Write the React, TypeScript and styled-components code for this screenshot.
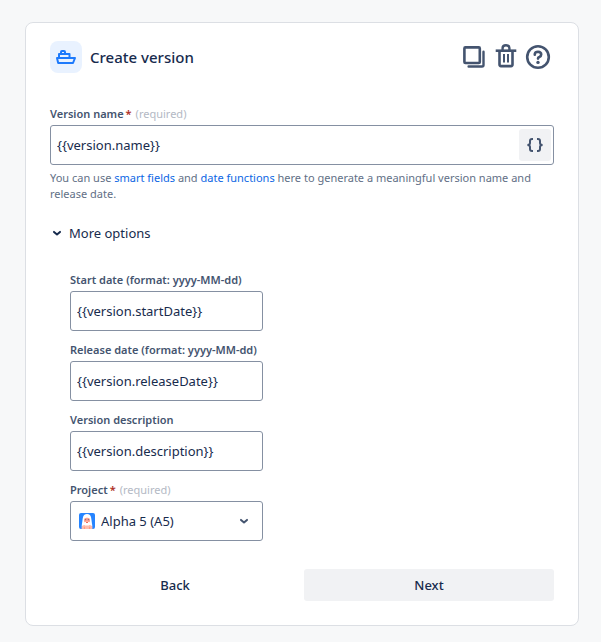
import React from "react";
import styled, { createGlobalStyle } from "styled-components";

const GlobalStyle = createGlobalStyle`
  *, *::before, *::after { box-sizing: border-box; }
  body {
    margin: 0;
    background: #f7f8f9;
    color: #172b4d;
    font-family: "Noto Sans", "Open Sans", sans-serif;
  }
  button, input, select { font: inherit; color: inherit; }
`;

const Page = styled.main`
  padding: 22px 22px 16px 25px;
`;

const Card = styled.form`
  padding: 18px 24px 24px;
  background: #fff;
  border: 1px solid #dcdfe4;
  border-radius: 8px;
`;

const Header = styled.header`
  display: flex;
  align-items: center;
  gap: 8px;
  margin-bottom: 33px;
`;

const IconTile = styled.span`
  display: flex;
  width: 32px;
  height: 32px;
  border-radius: 8px;
  background: #e9f2ff;
  color: #1d7afc;
`;

const Title = styled.h1`
  flex: 1;
  margin: 0;
  font-size: 15px;
  line-height: 20px;
  font-weight: 500;
`;

const Actions = styled.div`
  display: flex;
`;

const IconButton = styled.button<{ $filled?: boolean }>`
  display: flex;
  flex: none;
  align-items: center;
  justify-content: center;
  width: 32px;
  height: 32px;
  padding: 0;
  border: 0;
  border-radius: 3px;
  background: ${(p) => (p.$filled ? "#f1f2f4" : "transparent")};
  color: #44546f;
  cursor: pointer;
`;

const Field = styled.div`
  display: flex;
  flex-direction: column;
  gap: 3px;
`;

const Label = styled.label`
  color: #44546f;
  font-size: 11px;
  line-height: 16px;
  font-weight: 600;
  white-space: nowrap;
`;

const Asterisk = styled.span`
  padding: 0 4px 0 2px;
  color: #ae2e24;
`;

const Hint = styled.span`
  color: #b3b9c4;
  font-weight: 400;
`;

const Control = styled.div`
  position: relative;
  display: flex;
  align-items: center;
  height: 40px;
  padding-right: 2px;
  border: 1px solid #8590a2;
  border-radius: 3px;
`;

const Input = styled.input`
  flex: 1;
  min-width: 0;
  height: 100%;
  padding: 0 6px;
  border: 0;
  outline: 0;
  background: transparent;
  font-size: 13px;
`;

const Select = styled.select`
  flex: 1;
  height: 100%;
  padding: 0 28px 0 30px;
  border: 0;
  outline: 0;
  appearance: none;
  background: transparent;
  font-size: 13px;
`;

const Adornment = styled.span<{ $side: "left" | "right" }>`
  position: absolute;
  ${(p) => (p.$side === "left" ? "left: 8px" : "right: 11px")};
  display: flex;
  color: #44546f;
  pointer-events: none;
`;

const Help = styled.p`
  margin: 5px 0 21px;
  color: #626f86;
  font-size: 11px;
  line-height: 16px;
`;

const Link = styled.a`
  color: #0c66e4;
  text-decoration: none;
`;

const Disclosure = styled.button`
  display: flex;
  align-items: center;
  gap: 5px;
  padding: 0;
  border: 0;
  background: transparent;
  font-size: 13px;
  line-height: 20px;
  cursor: pointer;
`;

const Options = styled.div`
  display: grid;
  grid-template-columns: minmax(193px, max-content);
  gap: 11px;
  margin: 29px 20px 28px;
`;

const Footer = styled.footer`
  display: grid;
  grid-template-columns: 1fr 1fr;
  gap: 4px;
`;

const Button = styled.button<{ $filled?: boolean }>`
  height: 32px;
  border: 0;
  border-radius: 3px;
  background: ${(p) => (p.$filled ? "#f1f2f4" : "transparent")};
  font-size: 13px;
  font-weight: 500;
  cursor: pointer;
`;

const ShipIcon = () => (
  <svg width="32" height="32" viewBox="0 0 32 32" fill="none" stroke="currentColor" strokeWidth="2" strokeLinejoin="round" aria-hidden="true">
    <path d="M7 17H25L23 22H8.2Z" />
    <path d="M9 17V13H19.5V17" />
    <path d="M11 13V11Q11 10 12 10H14Q15 10 15 11V13" />
  </svg>
);

const CopyIcon = () => (
  <svg width="32" height="32" viewBox="0 0 32 32" fill="none" stroke="currentColor" strokeWidth="2.4" strokeLinejoin="round" strokeLinecap="round" aria-hidden="true">
    <rect x="6.4" y="6.4" width="15.4" height="15.6" rx="1" strokeWidth="2.6" />
    <path d="M25.5 10.8V24Q25.5 25.5 24 25.5H10.6" />
  </svg>
);

const TrashIcon = () => (
  <svg width="32" height="32" viewBox="0 0 32 32" fill="none" stroke="currentColor" strokeWidth="2.6" aria-hidden="true">
    <path d="M5.7 9.7H26.3" />
    <path d="M12.6 9V7Q12.6 4.3 16 4.3T19.4 7V9" strokeWidth="2.4" />
    <path d="M9.5 10V23.6Q9.5 25.1 11 25.1H21Q22.5 25.1 22.5 23.6V10" />
    <path d="M14 13V21.5M18 13V21.5" strokeWidth="2" />
  </svg>
);

const HelpIcon = () => (
  <svg width="32" height="32" viewBox="0 0 32 32" fill="none" stroke="currentColor" strokeWidth="2.6" aria-hidden="true">
    <circle cx="16" cy="16" r="10.8" />
    <path d="M12.8 13.8V13Q13.2 10.8 16 10.8Q19.2 11 19.2 13.5Q19.2 15.2 17.3 16Q16 16.5 16 17.6" strokeLinecap="round" />
    <circle cx="16" cy="21.4" r="1.7" fill="currentColor" stroke="none" />
  </svg>
);

const BracesIcon = () => (
  <svg width="32" height="32" viewBox="0 0 32 32" fill="none" stroke="currentColor" strokeWidth="2" aria-hidden="true">
    <path d="M14 10H13Q11 10 11 12V14Q11 16 8.4 16Q11 16 11 18V20Q11 22 13 22H14" />
    <path d="M18 10H19Q21 10 21 12V14Q21 16 23.6 16Q21 16 21 18V20Q21 22 19 22H18" />
  </svg>
);

const ChevronIcon = () => (
  <svg width="14" height="16" viewBox="0 0 14 16" fill="none" stroke="currentColor" strokeWidth="2" strokeLinecap="round" strokeLinejoin="round" aria-hidden="true">
    <path d="M4 6.9L7 9.5L10 6.9" />
  </svg>
);

const Avatar = () => (
  <svg width="16" height="16" viewBox="0 0 16 16" aria-hidden="true">
    <rect width="16" height="16" rx="2" fill="#2684ff" />
    <path d="M2.6 13.5L3.8 5Q4.4 1.2 8 1Q11.6 1.2 12.2 5L13.4 13.5Z" fill="#fff" />
    <path d="M2.6 16V14Q2.8 12.4 5 12H11Q13.2 12.4 13.4 14V16Z" fill="#ffbdad" />
    <rect x="5" y="4.8" width="6" height="5.6" rx="2.4" fill="#ffa38f" />
    <path d="M5.8 6.7H7.2M8.8 6.7H10.2" stroke="#7a5c78" strokeWidth="0.9" />
    <path d="M5 9.4Q8 8 11 9.4L10 12.4H6Z" fill="#fff" />
    <path d="M7 9.5H9" stroke="#ef5c48" strokeWidth="0.9" />
    <path d="M5.4 13.8V16M10.6 13.8V16" stroke="#ff8f73" strokeWidth="0.8" />
  </svg>
);

const Required = () => (
  <>
    <Asterisk>*</Asterisk>
    <Hint>(required)</Hint>
  </>
);

const fields = [
  { id: "start", label: "Start date (format: yyyy-MM-dd)", value: "{{version.startDate}}" },
  { id: "release", label: "Release date (format: yyyy-MM-dd)", value: "{{version.releaseDate}}" },
  { id: "description", label: "Version description", value: "{{version.description}}" },
];

export default function App() {
  return (
    <Page>
      <GlobalStyle />
      <Card onSubmit={(e: React.FormEvent) => e.preventDefault()}>
        <Header>
          <IconTile><ShipIcon /></IconTile>
          <Title>Create version</Title>
          <Actions>
            <IconButton type="button" aria-label="Duplicate"><CopyIcon /></IconButton>
            <IconButton type="button" aria-label="Delete"><TrashIcon /></IconButton>
            <IconButton type="button" aria-label="Help"><HelpIcon /></IconButton>
          </Actions>
        </Header>
        <Field>
          <Label htmlFor="name">Version name<Required /></Label>
          <Control>
            <Input id="name" defaultValue="{{version.name}}" required />
            <IconButton type="button" $filled aria-label="Insert smart value"><BracesIcon /></IconButton>
          </Control>
        </Field>
        <Help>
          You can use <Link href="#smart-fields">smart fields</Link> and{" "}
          <Link href="#date-functions">date functions</Link> here to generate a meaningful version name and release date.
        </Help>
        <Disclosure type="button" aria-expanded="true"><ChevronIcon />More options</Disclosure>
        <Options>
          {fields.map((f) => (
            <Field key={f.id}>
              <Label htmlFor={f.id}>{f.label}</Label>
              <Control><Input id={f.id} defaultValue={f.value} size={1} /></Control>
            </Field>
          ))}
          <Field>
            <Label htmlFor="project">Project<Required /></Label>
            <Control>
              <Adornment $side="left"><Avatar /></Adornment>
              <Select id="project" required>
                <option>Alpha 5 (A5)</option>
              </Select>
              <Adornment $side="right"><ChevronIcon /></Adornment>
            </Control>
          </Field>
        </Options>
        <Footer>
          <Button type="button">Back</Button>
          <Button type="submit" $filled>Next</Button>
        </Footer>
      </Card>
    </Page>
  );
}
